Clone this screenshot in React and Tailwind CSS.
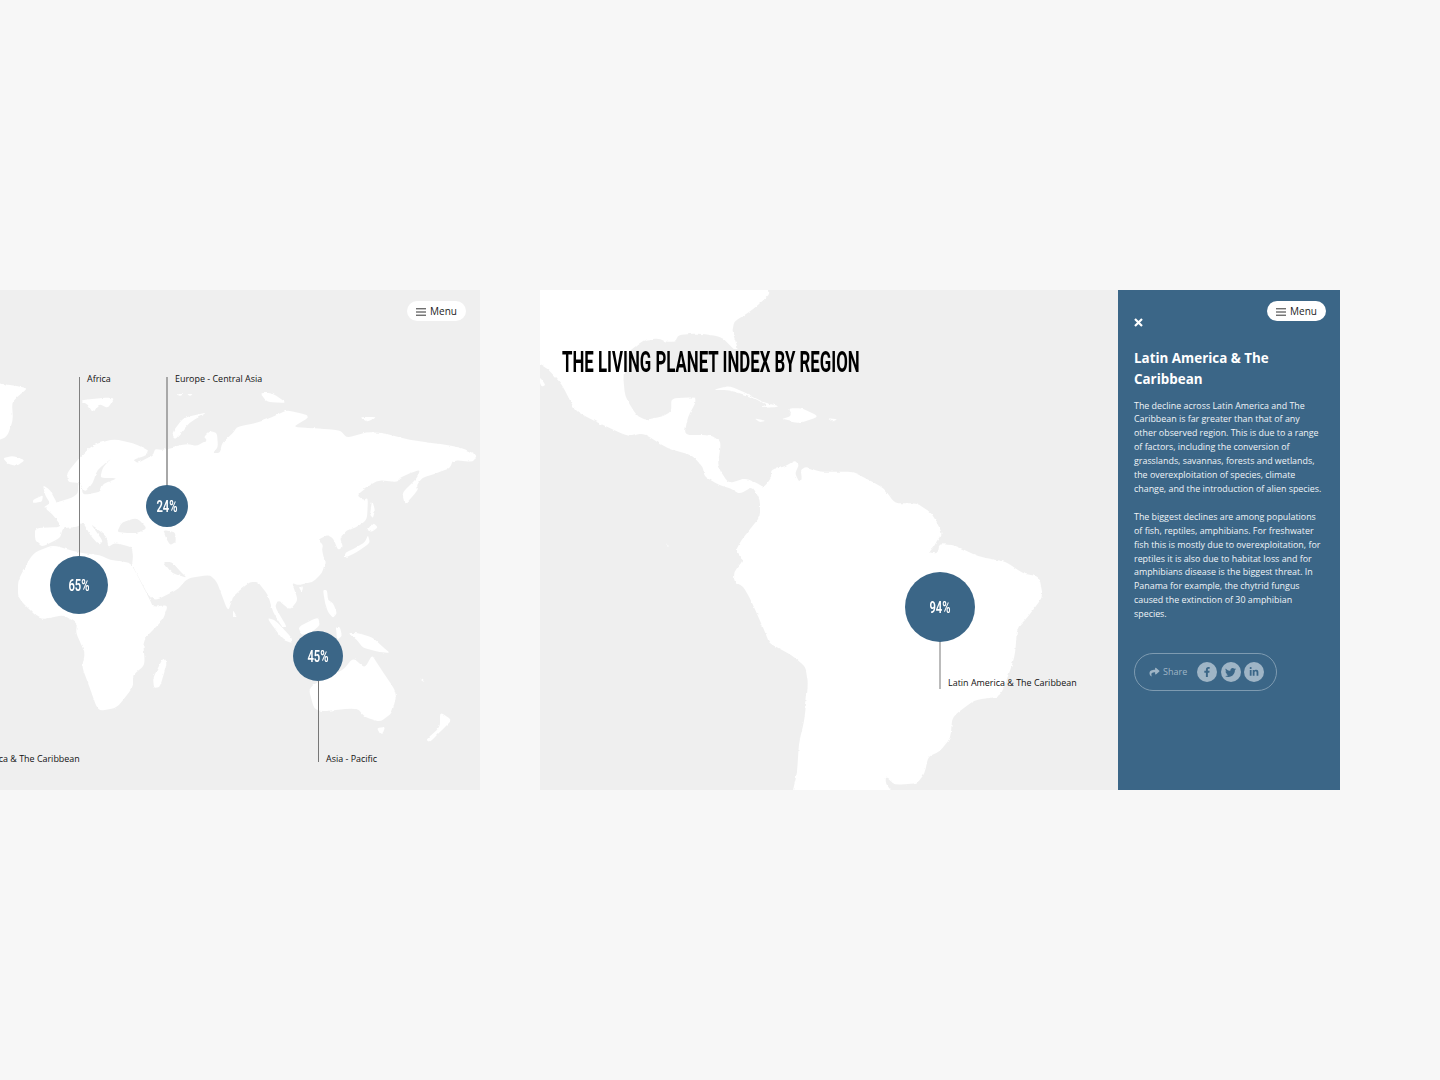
import React from "react";
import { FaShare, FaFacebookF, FaTwitter, FaLinkedinIn } from "react-icons/fa";

// Rounds each corner of an outline so the coast reads as organic, not faceted.
function smooth(points, k = 0.28) {
  const pts = points.trim().split(/\s+/).map((s) => s.split(",").map(Number));
  const n = pts.length;
  let d = "";
  pts.forEach((p, i) => {
    const a = pts[(i - 1 + n) % n];
    const b = pts[(i + 1) % n];
    const s = [p[0] + (a[0] - p[0]) * k, p[1] + (a[1] - p[1]) * k];
    const e = [p[0] + (b[0] - p[0]) * k, p[1] + (b[1] - p[1]) * k];
    d += `${i === 0 ? "M" : "L"}${s[0].toFixed(2)} ${s[1].toFixed(2)}Q${p[0]} ${p[1]} ${e[0].toFixed(2)} ${e[1].toFixed(2)}`;
  });
  return d + "Z";
}

const Poly = ({ p, fill = "#fff" }) => <path d={smooth(p)} fill={fill} />;

function WorldMap() {
  const land = [
    // Eurasia
    "152,602 132,565 133,557 132,547 115,543 108,547 107,537 90,523 103,541 99,545 90,535 83,522 78,527 63,528 60,538 42,547 35,540 35,528 62,527 53,515 45,508 57,502 72,498 78,493 78,484 81,484 83,495 100,492 103,484 118,478 100,478 103,467 112,458 97,470 93,483 85,492 80,483 68,482 67,473 80,457 93,445 113,439 133,443 148,450 147,455 133,460 138,463 153,455 155,449 163,450 167,448 187,444 197,446 207,440 204,437 210,431 217,433 218,447 213,453 220,453 222,443 233,433 237,427 260,422 277,415 287,410 307,415 308,418 293,427 310,428 340,430 347,438 367,432 383,433 410,440 433,443 460,447 477,455 473,462 453,460 450,468 437,473 422,478 417,485 418,490 405,505 402,493 417,478 420,470 410,473 400,478 397,482 377,480 357,495 363,500 368,498 367,520 355,528 347,530 340,538 343,547 338,550 333,538 327,535 318,540 323,545 322,550 325,563 322,573 313,582 298,585 292,583 298,600 290,610 278,600 275,607 287,627 282,627 273,612 268,595 258,582 250,582 240,590 233,597 228,612 217,582 210,575 188,578 177,590",
    // Africa
    "132,565 127,562 110,560 100,555 80,553 53,545 33,553 18,580 18,598 40,620 63,615 77,623 76,633 85,653 82,667 88,683 98,711 117,708 133,687 133,675 145,665 143,640 163,620 168,605 153,607 150,600",
    // Greenland
    "-10,382 10,385 28,388 17,397 12,403 13,420 7,437 -10,443",
    // Iceland
    "3,458 13,456 25,460 17,466 8,464",
    // UK, Ireland
    "43,485 50,490 58,505 43,508 50,503 45,495",
    "33,500 43,495 42,502 33,503",
    // Arctic islands
    "80,400 115,397 108,408 99,404 93,413 88,405",
    "172,433 183,418 208,412 190,422 175,440",
    "260,393 272,393 287,403 267,402",
    "360,417 377,417 367,422",
    "176,394 184,394 180,396",
    "187,394 193,394 190,396",
    // Japan
    "372,500 375,510 373,518 370,515",
    "367,530 373,523 378,527 372,532",
    "368,535 370,543 357,552 345,558 345,553 357,547 365,542",
    // South-East Asia
    "267,618 275,620 292,638 292,643 283,640",
    "298,627 318,617 320,625 312,632 302,635",
    "323,590 327,590 328,600 333,603 337,613 333,618 328,612 325,603",
    "336,627 340,627 342,636 337,640",
    "348,633 357,633 372,637 383,647 390,653 380,652 363,648 357,640",
    "233,610 237,617 233,617",
    "299,588 303,586 302,592",
    // Australia
    "372,655 377,663 397,693 392,713 380,722 365,717 357,708 315,712 308,687 343,670 353,658 365,668",
    "377,728 385,727 383,733 380,734",
    // New Zealand
    "440,712 452,720 442,730 430,742 426,740 440,727",
    "420,678 425,682 422,681",
    // Madagascar
    "163,658 167,663 160,687 154,688 153,678",
  ];
  const seas = [
    "117,532 122,522 137,518 147,528 138,533 128,533",
    "163,530 175,532 176,542 170,545 166,538",
    "163,562 172,573 187,578 180,571 172,562",
  ];
  return (
    <svg className="absolute inset-0 h-full w-full" viewBox="0 290 480 500" preserveAspectRatio="none">
      <defs>
        <filter id="coastL" filterUnits="userSpaceOnUse" x="-20" y="280" width="520" height="520">
          <feTurbulence type="fractalNoise" baseFrequency="0.22" numOctaves="2" seed="4" />
          <feDisplacementMap in="SourceGraphic" scale="2.4" xChannelSelector="R" yChannelSelector="G" />
        </filter>
      </defs>
      <g filter="url(#coastL)">
        {land.map((p, i) => <Poly key={i} p={p} />)}
        {seas.map((p, i) => <Poly key={i} p={p} fill="#efefef" />)}
      </g>
    </svg>
  );
}

function AmericasMap() {
  const main =
    "-40,-60 -30,-70 600,-70 612,-10 622,12 585,50 560,70 525,95 520,125 535,175 528,182 490,140 430,130 375,135 365,155 340,155 320,145 280,150 235,190 225,260 230,320 260,375 285,390 330,380 355,365 355,325 420,322 420,340 400,380 390,435 460,435 490,455 480,530 510,580 555,565 585,578 605,592 625,565 625,540 660,530 690,512 700,525 690,550 700,575 708,565 705,540 720,530 755,545 800,545 845,545 890,570 930,595 960,640 1020,640 1060,670 1088,730 1075,750 1065,770 1052,788 1075,790 1080,762 1115,765 1130,770 1185,800 1260,815 1305,850 1350,860 1360,920 1320,980 1290,1015 1285,1090 1275,1130 1245,1220 1175,1230 1115,1280 1110,1345 1080,1385 1050,1400 1040,1450 1020,1480 960,1485 935,1460 935,1480 955,1510 950,1570 690,1570 682,1510 695,1450 700,1360 715,1290 725,1180 718,1130 680,1095 620,1060 610,1030 570,930 550,890 525,875 525,845 550,810 530,780 545,750 570,715 595,680 595,630 575,590 540,612 515,595 485,585 445,560 440,530 410,495 345,475 280,430 240,440 150,395 100,365 85,340 60,285 20,235 -40,200";
  const islands = [
    "468,300 510,287 560,310 600,335 648,350 590,355 615,345 570,320 510,300",
    "670,355 710,355 755,380 700,400 650,388 680,378",
    "580,385 610,392 595,397",
    "778,385 805,388 790,395",
    "0,262 15,285 5,290 0,280",
    "340,758 350,775 345,770",
  ];
  return (
    <svg className="absolute inset-0 h-full w-full" viewBox="0 0 1563 1500" preserveAspectRatio="none">
      <defs>
        <filter id="coastR" filterUnits="userSpaceOnUse" x="-80" y="-90" width="1720" height="1700">
          <feTurbulence type="fractalNoise" baseFrequency="0.07" numOctaves="2" seed="9" />
          <feDisplacementMap in="SourceGraphic" scale="8" xChannelSelector="R" yChannelSelector="G" />
        </filter>
      </defs>
      <g filter="url(#coastR)">
        <Poly p={main} />
        {islands.map((p, i) => <Poly key={i} p={p} />)}
      </g>
    </svg>
  );
}

const Hamburger = () => (
  <svg width="10" height="8" viewBox="0 0 10 8" fill="none" stroke="#333" strokeWidth="1">
    <path d="M0 .8h10M0 4h10M0 7.2h10" />
  </svg>
);

const Menu = ({ className }) => (
  <div className={`absolute top-[11px] flex h-5 w-[59px] items-center justify-center gap-[4px] rounded-full bg-white pt-px text-[10px] text-[#222] ${className}`}>
    <Hamburger />
    <span>Menu</span>
  </div>
);

const Circle = ({ className, text }) => (
  <div className={`absolute flex items-center justify-center rounded-full bg-[#3b6687] ${className}`}>
    <span className="scale-x-[0.66] font-['Roboto',sans-serif] text-[17px] font-semibold leading-none text-white">{text}</span>
  </div>
);

const Label = ({ className, children }) => (
  <div className={`absolute whitespace-nowrap text-[8.95px] leading-[12px] text-[#111] ${className}`}>{children}</div>
);

export default function App() {
  return (
    <div className="flex min-h-[1080px] items-center gap-[60px] bg-[#f7f7f7] font-['Open_Sans',sans-serif]">
      <section className="relative h-[500px] w-[480px] overflow-hidden bg-[#efefef]">
        <WorldMap />
        <Menu className="left-[407px]" />

        <div className="absolute left-[79px] top-[87px] h-[180px] w-px bg-[#808080]" />
        <div className="absolute left-[166px] top-[87px] h-[109px] w-[2px] bg-[#a8a8a8]" />
        <div className="absolute left-[318px] top-[391px] h-[81px] w-px bg-[#777]" />

        <Label className="left-[87px] top-[83px]">Africa</Label>
        <Label className="left-[175px] top-[83px]">Europe - Central Asia</Label>
        <Label className="left-[-49px] top-[463px]">Latin America &amp; The Caribbean</Label>
        <Label className="left-[326px] top-[463px]">Asia - Pacific</Label>

        <Circle className="left-[146px] top-[195px] h-[42px] w-[42px]" text="24%" />
        <Circle className="left-[50px] top-[266px] h-[58px] w-[58px]" text="65%" />
        <Circle className="left-[293px] top-[341px] h-[50px] w-[50px]" text="45%" />
      </section>

      <section className="flex h-[500px] w-[800px]">
        <div className="relative h-full w-[578px] overflow-hidden bg-[#efefef]">
          <AmericasMap />
          <h1 className="relative ml-[22px] mt-[54px] w-[560px] origin-left scale-x-[0.561] whitespace-nowrap font-['Roboto',sans-serif] text-[30px] font-bold leading-[35px] text-black">
            THE LIVING PLANET INDEX BY REGION
          </h1>
          <div className="absolute left-[399px] top-[351px] h-[48px] w-[2px] bg-[#bbb]" />
          <Label className="left-[408px] top-[387px]">Latin America &amp; The Caribbean</Label>
          <Circle className="left-[365px] top-[282px] h-[70px] w-[70px]" text="94%" />
        </div>

        <aside className="relative flex h-full w-[222px] flex-col bg-[#3b6687] pl-[16px] pt-[28px] text-white">
          <Menu className="left-[149px]" />
          <svg width="9" height="9" viewBox="0 0 9 9" className="block" stroke="#fff" strokeWidth="2.2" fill="none">
            <path d="M1 1l7 7M8 1L1 8" />
          </svg>
          <h2 className="mt-[21px] w-[190px] text-[13.4px] font-bold leading-[21px]">Latin America &amp; The Caribbean</h2>
          <div className="mt-[8.5px] w-[190px] text-[8.9px] leading-[13.9px] text-[#f0f4f7]">
            <p>The decline across Latin America and The Caribbean is far greater than that of any other observed region. This is due to a range of factors, including the conversion of grasslands, savannas, forests and wetlands, the overexploitation of species, climate change, and the introduction of alien species.</p>
            <p className="mt-[14px]">The biggest declines are among populations of fish, reptiles, amphibians. For freshwater fish this is mostly due to overexploitation, for reptiles it is also due to habitat loss and for amphibians disease is the biggest threat. In Panama for example, the chytrid fungus caused the extinction of 30 amphibian species.</p>
          </div>
          <div className="mt-[32px] flex h-[38px] w-[143px] items-center rounded-full border border-[#7e9bb1] pl-[14px] text-[#9fb5c6]">
            <FaShare className="h-[10px] w-[11px]" />
            <span className="ml-[3px] text-[9px]">Share</span>
            <div className="ml-[10px] flex gap-[3.5px]">
              <span className="flex h-5 w-5 items-center justify-center rounded-full bg-[#9fb5c6] text-[#3b6687]"><FaFacebookF className="h-[10px] w-[10px]" /></span>
              <span className="flex h-5 w-5 items-center justify-center rounded-full bg-[#9fb5c6] text-[#3b6687]"><FaTwitter className="h-[11px] w-[11px]" /></span>
              <span className="flex h-5 w-5 items-center justify-center rounded-full bg-[#9fb5c6] text-[#3b6687]"><FaLinkedinIn className="h-[10px] w-[10px]" /></span>
            </div>
          </div>
        </aside>
      </section>
    </div>
  );
}
